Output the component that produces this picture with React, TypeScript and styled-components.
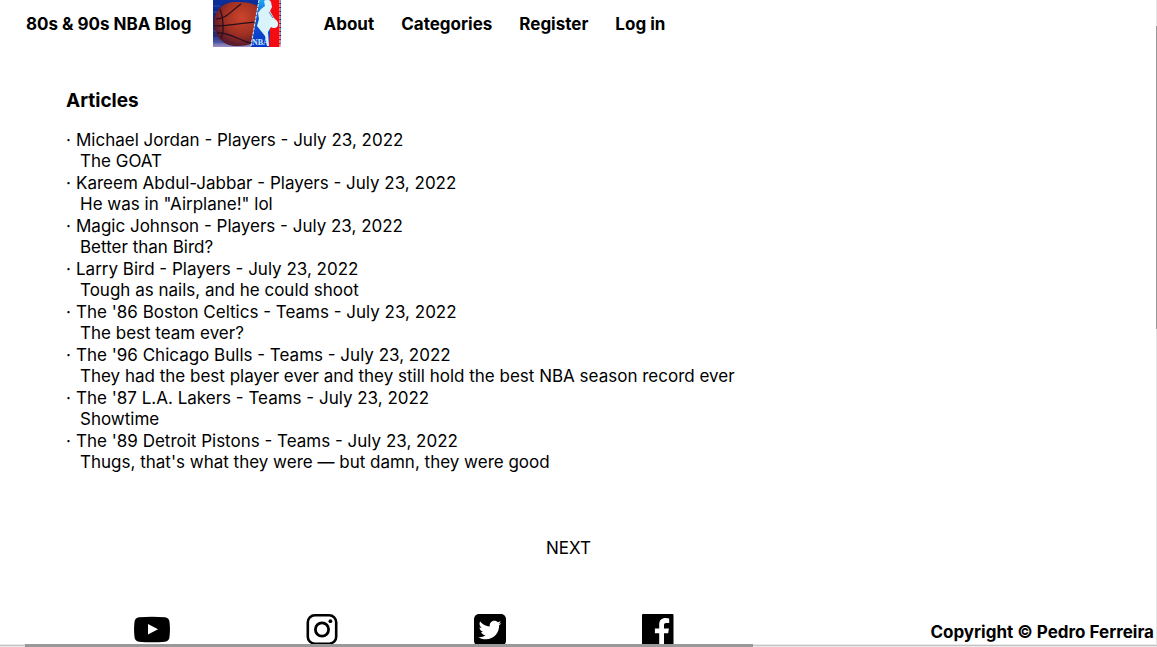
import React from "react";
import styled, { createGlobalStyle } from "styled-components";
import { FaTwitterSquare } from "react-icons/fa";

const Global = createGlobalStyle`
  * { box-sizing: border-box; }
  body {
    margin: 0;
    background: #fff;
    color: #000;
    font-family: Inter, "Liberation Sans", sans-serif;
    font-size: 17px;
    line-height: 22px;
  }
`;

const Page = styled.div`
  position: relative;
  display: flex;
  flex-direction: column;
  min-height: 100vh;
  overflow: hidden;
`;

const Header = styled.header`
  display: flex;
  align-items: center;
  padding-left: 26px;
  font-weight: 700;
`;

const TextLink = styled.a`
  color: inherit;
  text-decoration: none;
`;

const Brand = styled(TextLink)`
  display: flex;
  align-items: center;
  gap: 21px;
`;

const Logo = styled.svg`
  display: block;
`;

const Nav = styled.nav`
  display: flex;
  gap: 27px;
  margin-left: 43px;
`;

const Main = styled.main`
  flex: 1;
  padding: 43px 20px 0 66px;
`;

const Heading = styled.h1`
  margin: 0 0 17px;
  font-size: 19px;
  line-height: 22px;
  font-weight: 700;
`;

const Articles = styled.ul`
  margin: 0;
  padding: 0;
  list-style: none;
`;

const ArticleTitle = styled.div`
  display: flex;
`;

const Bullet = styled.span`
  width: 10px;
`;

const Summary = styled.p`
  margin: 0;
  padding-left: 14px;
  line-height: 21px;
`;

const Pager = styled.div`
  display: flex;
  justify-content: center;
  padding: 64px 20px 55px 0;
`;

const Footer = styled.footer`
  display: flex;
  justify-content: space-between;
  align-items: flex-start;
  padding: 0 3px 0 134px;
`;

const Socials = styled.div`
  display: flex;
  gap: 136px;
`;

const SocialLink = styled.a`
  display: block;
  height: 33px;
  color: #000;

  svg {
    display: block;
  }
`;

const TwitterIcon = styled(FaTwitterSquare)`
  border-radius: 5px;
`;

const Copyright = styled.p`
  margin: 7px 0 0;
  font-weight: 700;
`;

const BottomTrack = styled.div`
  position: absolute;
  right: 0;
  bottom: 0;
  left: 0;
  display: flex;
  height: 3px;
  padding-left: 25px;
  border-top: 1px solid #e8e8e8;
  border-bottom: 1px solid #e8e8e8;
  background: #c4c4c4;
`;

const BottomThumb = styled.div`
  width: calc(65% - 8px);
  height: 3px;
  margin-top: -1px;
  background: #999;
`;

const SideTrack = styled.div`
  position: absolute;
  top: 0;
  right: 0;
  bottom: 3px;
  width: 1px;
  padding-top: 26px;
  background: #e4e4e4;
`;

const SideThumb = styled.div`
  height: 49%;
  background: #999;
`;

const articles = [
  ["Michael Jordan - Players - July 23, 2022", "The GOAT"],
  ["Kareem Abdul-Jabbar - Players - July 23, 2022", 'He was in "Airplane!" lol'],
  ["Magic Johnson - Players - July 23, 2022", "Better than Bird?"],
  ["Larry Bird - Players - July 23, 2022", "Tough as nails, and he could shoot"],
  ["The '86 Boston Celtics - Teams - July 23, 2022", "The best team ever?"],
  ["The '96 Chicago Bulls - Teams - July 23, 2022", "They had the best player ever and they still hold the best NBA season record ever"],
  ["The '87 L.A. Lakers - Teams - July 23, 2022", "Showtime"],
  ["The '89 Detroit Pistons - Teams - July 23, 2022", "Thugs, that's what they were — but damn, they were good"],
];

function NbaLogo() {
  return (
    <Logo width="68" height="47" viewBox="0 0 68 47" aria-hidden="true">
      <defs>
        <linearGradient id="sky" x1="0" y1="0" x2="0" y2="1">
          <stop offset="0" stopColor="#0a2f9c" />
          <stop offset="0.5" stopColor="#14246e" />
          <stop offset="0.8" stopColor="#2a2c78" />
          <stop offset="1" stopColor="#9c92c4" />
        </linearGradient>
        <radialGradient id="ball" cx="0.62" cy="0.35" r="0.65">
          <stop offset="0" stopColor="#cc452c" />
          <stop offset="0.6" stopColor="#a03022" />
          <stop offset="1" stopColor="#571b2e" />
        </radialGradient>
        <linearGradient id="badge" x1="0" y1="0" x2="0" y2="1">
          <stop offset="0" stopColor="#20a4ee" />
          <stop offset="0.4" stopColor="#0c52d4" />
          <stop offset="1" stopColor="#0838c8" />
        </linearGradient>
      </defs>
      <rect width="68" height="47" fill="url(#sky)" />
      <path d="M0 6h7M0 12h5M0 31h4M0 38h8M0 42h12" stroke="#2c50b4" />
      <path d="M1 23C1 10 10 2 23 2c10 0 17 1 23 5v32c-6 5-13 7-23 7C10 46 1 36 1 23z" fill="url(#ball)" />
      <g fill="none" stroke="#280e1c" strokeWidth="1.2">
        <path d="M1 26c15 0 26-3 44-4" />
        <path d="M3 19c10 0 15-8 25-15" />
        <path d="M4 33c10-1 18 5 33 10" />
        <path d="M7 9c4 10 4 24 1 29" />
      </g>
      <path d="M46 0h21l-1 47H38l5-29z" fill="url(#badge)" />
      <path d="M57 0h10v47H56l1-15z" fill="#f30d12" />
      <path d="M46 0l-3 17-5 29M67 0v47" fill="none" stroke="#d8f4ff" strokeDasharray="3 1" />
      <path d="M51 1c3-2 6-1 7 1l1 5-2 4 4 7 3 3-1 5-5 1-3 5 1 14h-2l-2-10-8-10 2-7-1-6 3-4 4-3-1-5z" fill="#d9f3fa" />
      <path d="M56 12l4 6" stroke="#4a7ba8" fill="none" />
      <circle cx="61" cy="24" r="4" fill="#dff7ff" />
      <text x="39" y="45" fill="#c9e6ff" fontFamily="Liberation Serif, serif" fontSize="8">NBA</text>
    </Logo>
  );
}

function YouTubeIcon() {
  return (
    <svg width="36" height="32" viewBox="0 0 36 32" aria-hidden="true">
      <path fillRule="evenodd" fill="currentColor" d="M5 3.3Q18 2 31 3.3Q35 3.7 35.5 8Q36.4 15.5 35.5 23Q35 27.3 31 27.7Q18 29 5 27.7Q1 27.3.5 23Q-.4 15.5.5 8Q1 3.7 5 3.3zM14 10v10.5l10-5.2z" />
    </svg>
  );
}

function InstagramIcon() {
  return (
    <svg width="32" height="32" viewBox="0 0 32 32" fill="none" stroke="currentColor" aria-hidden="true">
      <rect x="1.8" y="1.3" width="28.4" height="28.4" rx="7" strokeWidth="2.6" />
      <circle cx="16" cy="15.5" r="6.6" strokeWidth="2.8" />
      <circle cx="24.4" cy="7.2" r="1.9" fill="currentColor" stroke="none" />
    </svg>
  );
}

function FacebookIcon() {
  return (
    <svg width="32" height="32" viewBox="0 0 32 32" aria-hidden="true">
      <path fill="currentColor" d="M1 0H30.5q1 0 1 1V30q0 1-1.5 1H22V19.2h4.2l.7-4.8H22v-3c0-1.6.6-2.3 2.4-2.3h2.8V4.4q-1.7-.3-3.6-.3c-4 0-6.4 2.3-6.4 6.5v3.8h-4.3v4.8h4.3V31H1Q0 31 0 30V1Q0 0 1 0z" />
    </svg>
  );
}

export default function App() {
  return (
    <Page>
      <Global />
      <Header>
        <Brand href="#">
          80s &amp; 90s NBA Blog
          <NbaLogo />
        </Brand>
        <Nav>
          <TextLink href="#about">About</TextLink>
          <TextLink href="#categories">Categories</TextLink>
          <TextLink href="#register">Register</TextLink>
          <TextLink href="#login">Log in</TextLink>
        </Nav>
      </Header>
      <Main>
        <Heading>Articles</Heading>
        <Articles>
          {articles.map(([title, summary]) => (
            <li key={title}>
              <ArticleTitle>
                <Bullet>·</Bullet>
                <TextLink href="#article">{title}</TextLink>
              </ArticleTitle>
              <Summary>{summary}</Summary>
            </li>
          ))}
        </Articles>
      </Main>
      <Pager>
        <TextLink href="#next">NEXT</TextLink>
      </Pager>
      <Footer>
        <Socials>
          <SocialLink href="#youtube" aria-label="YouTube"><YouTubeIcon /></SocialLink>
          <SocialLink href="#instagram" aria-label="Instagram"><InstagramIcon /></SocialLink>
          <SocialLink href="#twitter" aria-label="Twitter">
            <TwitterIcon size={32} viewBox="0 32 448 448" />
          </SocialLink>
          <SocialLink href="#facebook" aria-label="Facebook"><FacebookIcon /></SocialLink>
        </Socials>
        <Copyright>Copyright © Pedro Ferreira</Copyright>
      </Footer>
      <BottomTrack>
        <BottomThumb />
      </BottomTrack>
      <SideTrack>
        <SideThumb />
      </SideTrack>
    </Page>
  );
}
